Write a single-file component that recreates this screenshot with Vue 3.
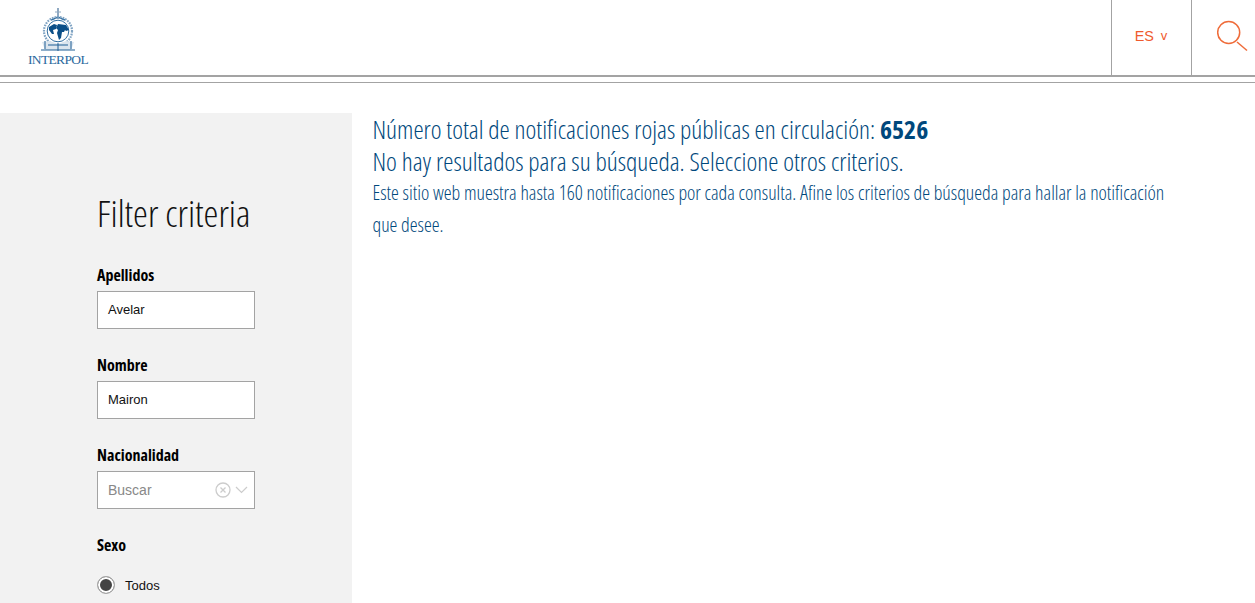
<script setup>
const fields = [
  { label: 'Apellidos', value: 'Avelar' },
  { label: 'Nombre', value: 'Mairon' },
]
</script>

<template>
  <div class="page">
    <header class="header">
      <a class="logo">
        <svg class="emblem" width="36" height="45" viewBox="0 0 36 45" fill="none">
          <path d="M18 0v11" stroke="#8fa9c2" stroke-width="2"/>
          <path d="M15 4h6" stroke="#8fa9c2" stroke-width="1"/>
          <path d="M11 12l7-3 7 3" stroke="#2d6ca0" stroke-width="1.500"/>
          <circle cx="18" cy="23" r="14" stroke="#7fa3c3" stroke-width="2.200" stroke-dasharray="1.700 1"/>
          <circle cx="18" cy="23" r="10.800" fill="#fff" stroke="#2d6ca0" stroke-width="1"/>
          <path d="M9 19l5-3 3 1-1 4-3 1 1 4-2 0-3-4z" fill="#0b4f88"/>
          <path d="M18 16l8 1 3 5-3 1-1-1-1 2-2 0-1 6-2 2-2-7 1-3-2-2z" fill="#0b4f88"/>
          <path d="M2 34l8-1 8 3 8-3 8 1-3 8H5z" fill="#dbe5ee"/>
          <path d="M5 33v8M31 33v8M18 35v8M1 42h34M8 37h20" stroke="#1f5f95" stroke-width="1"/>
        </svg>
        <span class="wordmark">INTERPOL</span>
      </a>
      <div class="header-actions">
        <div class="lang"><span>ES</span><span class="lang-v">v</span></div>
        <div class="search">
          <svg width="32" height="32" viewBox="0 0 32 32" fill="none" stroke="#ef6c3a" stroke-width="1.500">
            <circle cx="11.700" cy="12.500" r="11"/>
            <path d="M20 22l10 8.500"/>
          </svg>
        </div>
      </div>
    </header>
    <div class="rule"></div>

    <main class="content">
      <aside class="sidebar">
        <h2 class="title">Filter criteria</h2>
        <div v-for="f in fields" :key="f.label" class="field">
          <label class="label">{{ f.label }}</label>
          <div class="input">{{ f.value }}</div>
        </div>
        <div class="field">
          <label class="label">Nacionalidad</label>
          <div class="input select">
            <span class="placeholder">Buscar</span>
            <svg class="clear" width="16" height="16" viewBox="0 0 16 16" fill="none" stroke="#ccc" stroke-width="1.300">
              <circle cx="8" cy="8" r="7"/>
              <path d="M5.500 5.500l5 5M10.500 5.500l-5 5"/>
            </svg>
            <svg class="chev" width="13" height="8" viewBox="0 0 13 8" fill="none" stroke="#ccc" stroke-width="1.200">
              <path d="M1 1l5.500 5.500L12 1"/>
            </svg>
          </div>
        </div>
        <div class="label sexo">Sexo</div>
        <div class="radio-row">
          <span class="radio"></span>
          <span class="radio-text">Todos</span>
        </div>
      </aside>

      <section class="results">
        <p class="big">Número total de notificaciones rojas públicas en circulación: <strong>6526</strong></p>
        <p class="big">No hay resultados para su búsqueda. Seleccione otros criterios.</p>
        <p class="small">Este sitio web muestra hasta 160 notificaciones por cada consulta. Afine los criterios de búsqueda para hallar la notificación que desee.</p>
      </section>
    </main>
  </div>
</template>

<style>
html, body { margin: 0; background: #fff; overflow: hidden; }
</style>

<style scoped>
.page { width: 1255px; height: 603px; overflow: hidden; font-family: "Liberation Sans", Arial, sans-serif; }
.header { height: 75px; display: flex; justify-content: space-between; border-bottom: 2px solid #a3a3a3; box-sizing: content-box; }
.logo { display: flex; flex-direction: column; align-items: center; width: 62px; margin-left: 27px; padding-top: 8px; box-sizing: border-box; }
.emblem { display: block; }
.wordmark { font-family: "Liberation Serif", serif; font-size: 13.500px; line-height: 13px; color: #2b6a9e; letter-spacing: -0.650px; white-space: nowrap; }
.header-actions { display: flex; }
.lang { width: 80px; border-left: 1px solid #a3a3a3; display: flex; align-items: center; justify-content: center; gap: 7px; color: #ef5a2d; font-size: 14.400px; padding: 0 1px 4px 0; box-sizing: border-box; }
.lang-v { font-size: 13px; }
.search { width: 63px; border-left: 1px solid #a3a3a3; display: flex; align-items: center; justify-content: flex-start; }
.search svg { margin: 0 0 3px 25px; }
.rule { height: 1px; background: #a3a3a3; margin-top: 5px; }
.content { display: flex; margin-top: 30px; }
.sidebar { width: 352px; height: 490px; flex: none; background: #f2f2f2; padding: 78px 0 0 97px; box-sizing: border-box; }
.title { margin: 0 0 28px; font: 300 37.500px/44px "Open Sans", sans-serif; font-stretch: 75%; color: #111; }
.field { margin-bottom: 24px; }
.label { display: block; font: 700 16px/24px "Open Sans", sans-serif; font-stretch: 75%; color: #000; margin-bottom: 4px; }
.input { width: 158px; height: 38px; box-sizing: border-box; border: 1px solid #a3a3a3; background: #fff; padding: 0 10px; font-size: 13px; line-height: 36px; color: #111; }
.select { display: flex; align-items: center; }
.placeholder { flex: 1; font-size: 14px; color: #888; }
.clear { margin-right: 4px; }
.chev { margin-right: -4px; }
.sexo { margin-bottom: 19px; }
.radio-row { display: flex; align-items: center; gap: 10px; }
.radio { width: 18px; height: 18px; border-radius: 50%; border: 1px solid #aaa; background: #444; box-shadow: inset 0 0 0 2px #fff; box-sizing: border-box; }
.radio-text { font-size: 13px; color: #111; }
.results { padding: 0 0 0 20.500px; width: 800px; color: #00487c; font-family: "Open Sans", sans-serif; font-stretch: 75%; font-weight: 300; }
.big { margin: 0; font-size: 25.750px; line-height: 32px; }
.big strong { font-weight: 700; }
.small { margin: 0; font-size: 19.800px; line-height: 32px; }
</style>
